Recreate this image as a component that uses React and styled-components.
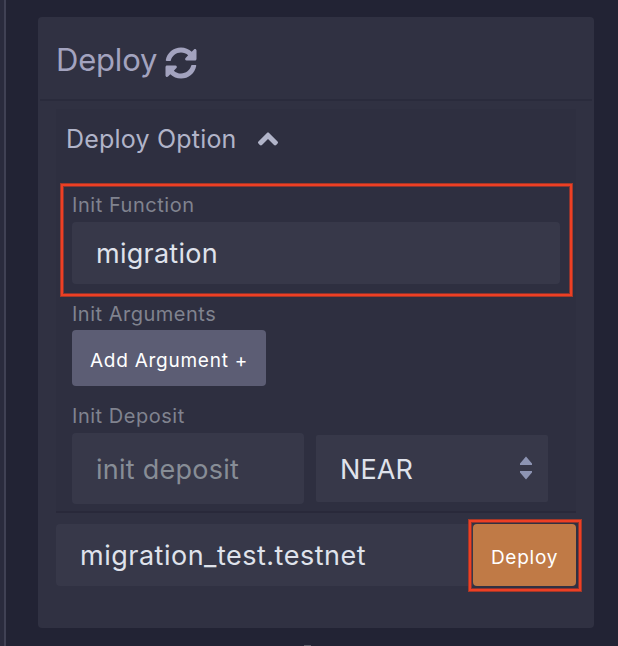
import React from "react";
import styled, { createGlobalStyle } from "styled-components";
import { FaSyncAlt, FaAngleUp } from "react-icons/fa";

const GlobalStyle = createGlobalStyle`
  * { box-sizing: border-box; }
  body { margin: 0; background: #222334; font-family: Inter, sans-serif; }
`;

const Page = styled.main`
  position: relative;
  width: 618px;
  height: 646px;
  overflow: hidden;
  background: #222334;
  border-left: 4px solid #2a2b3d;
  display: flex;
`;

const Divider = styled.div`
  width: 2px;
  background: #404154;
`;

const Card = styled.section`
  width: 556px;
  height: 611px;
  margin: 17px 0 0 32px;
  border-radius: 4px;
  background: #303142;
`;

const CardHeader = styled.header`
  display: flex;
  align-items: center;
  height: 84px;
  margin: 0 2px;
  padding: 3px 16px 0;
  border-bottom: 2px solid #2a2b3c;
  color: #a3a3bf;
`;

const Label = styled.span`
  display: block;
  white-space: nowrap;
  font-size: ${(p) => p.$size}px;
  line-height: ${(p) => p.$line || 30}px;
  letter-spacing: ${(p) => p.$track || 0}px;
  color: ${(p) => p.$color || "inherit"};
`;

const Caption = styled(Label)`
  height: ${(p) => p.$height}px;
  font-size: 20px;
  line-height: ${(p) => p.$line || 25}px;
  color: #80838f;
`;

const RefreshIcon = styled(FaSyncAlt)`
  width: 32px;
  height: 32px;
  margin: 7px 0 0 8px;
`;

const Options = styled.div`
  width: 520px;
  height: 404px;
  margin: 8px 18px 0;
  padding: 0 16px;
  background: #2e2f40;
  border-bottom: 2px solid #29293a;
`;

const Toggle = styled.div`
  display: flex;
  align-items: center;
  height: 60px;
  margin-left: -6px;
  color: #b1b4c9;
`;

const ChevronIcon = styled(FaAngleUp)`
  width: 32px;
  height: 32px;
  margin: -1px 0 0 15px;
`;

const Field = styled.div`
  position: relative;
  height: ${(p) => p.$height}px;
  margin-top: ${(p) => p.$top}px;
`;

const Box = styled.div`
  display: flex;
  align-items: center;
  justify-content: space-between;
  width: ${(p) => p.$width}px;
  height: ${(p) => p.$height}px;
  padding: 2px 15px 0 24px;
  border-radius: ${(p) => p.$radius || "4px"};
  background: #373849;
  color: ${(p) => p.$color || "#dfe2eb"};
`;

const Button = styled.button`
  display: flex;
  align-items: center;
  justify-content: center;
  width: ${(p) => p.$width}px;
  height: ${(p) => p.$height}px;
  padding: 6px 0 0;
  border: 0;
  border-radius: 4px;
  background: ${(p) => p.$fill};
  color: #fff;
  font-family: inherit;
`;

const Row = styled.div`
  display: flex;
  align-items: center;
  gap: 12px;
`;

const DeployRow = styled.div`
  display: flex;
  margin: 11px 18px 0;
`;

const Highlight = styled.div`
  position: absolute;
  inset: ${(p) => p.$inset};
  border: 2px solid #ed3f24;
  box-shadow: 0 0 0 1px #a33829, inset 0 0 0 1px #8b3530;
  pointer-events: none;
`;

const Anchor = styled.div`
  position: relative;
`;

const Arrows = styled.svg`
  width: 14px;
  height: 24px;
  margin-top: -3px;
  fill: #8d94b3;
`;

const FooterEdge = styled.div`
  position: absolute;
  left: 300px;
  bottom: 0;
  width: 7px;
  height: 1px;
  background: #5b5c68;
`;

export default function App() {
  return (
    <Page>
      <GlobalStyle />
      <Divider />
      <Card>
        <CardHeader>
          <Label $size={31} $line={40} $track={-0.2}>Deploy</Label>
          <RefreshIcon />
        </CardHeader>
        <Options>
          <Toggle>
            <Label $size={25} $track={0.2}>Deploy Option</Label>
            <ChevronIcon />
          </Toggle>
          <Field $top={24} $height={93}>
            <Caption $height={29} $track={0.54}>Init Function</Caption>
            <Box $width={488} $height={62}>
              <Label $size={27} $track={0.25}>migration</Label>
            </Box>
            <Highlight $inset="-9px -12px -10px -11px" />
          </Field>
          <Field $top={16} $height={84}>
            <Caption $height={28} $track={0.5}>Init Arguments</Caption>
            <Button $width={194} $height={56} $fill="#5c5d74">
              <Label $size={19} $track={0.75}>Add Argument +</Label>
            </Button>
          </Field>
          <Field $top={16} $height={101}>
            <Caption $height={31} $line={29} $track={0.52}>Init Deposit</Caption>
            <Row>
              <Box $width={232} $height={71} $color="#878d96">
                <Label $size={27} $track={0.25}>init deposit</Label>
              </Box>
              <Box $width={232} $height={67} $radius="2px">
                <Label $size={27} $track={0.1}>NEAR</Label>
                <Arrows viewBox="0 0 14 24">
                  <path d="M7 .5 13 7.500V9H1V7.500ZM1 15H13V16.500L7 23.500 1 16.500Z" />
                </Arrows>
              </Box>
            </Row>
          </Field>
        </Options>
        <DeployRow>
          <Box $width={417} $height={62} $radius="4px 0 0 4px">
            <Label $size={27} $track={0.5}>migration_test.testnet</Label>
          </Box>
          <Anchor>
            <Button $width={103} $height={62} $fill="#c07a46">
              <Label $size={19} $track={0.75}>Deploy</Label>
            </Button>
            <Highlight $inset="-4px -5px -5px -4px" />
          </Anchor>
        </DeployRow>
      </Card>
      <FooterEdge />
    </Page>
  );
}
